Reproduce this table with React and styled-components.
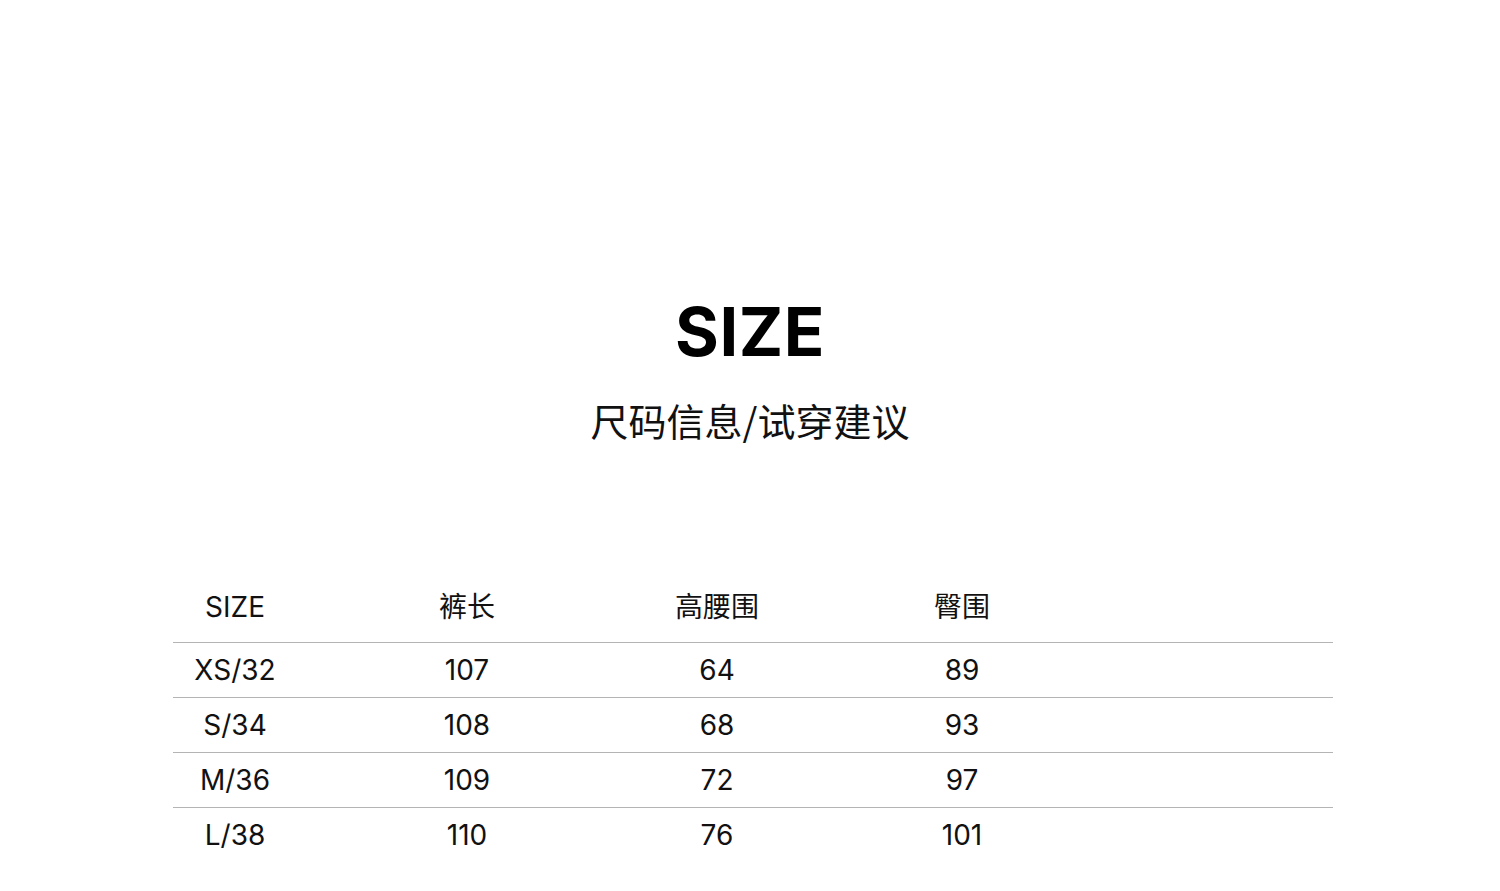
import React from 'react';
import styled, { createGlobalStyle } from 'styled-components';

const GlobalStyle = createGlobalStyle`
  body {
    margin: 0;
    background: #ffffff;
    font-family: Inter, "Noto Sans CJK SC", sans-serif;
    color: #111111;
  }
`;

const Page = styled.div`
  width: 1500px;
  height: 891px;
  overflow: hidden;
  display: flex;
  flex-direction: column;
  align-items: center;
`;

const Title = styled.h1`
  margin: 292px 0 0;
  font-family: Inter, "Noto Sans CJK SC", sans-serif;
  font-size: 67px;
  line-height: 80px;
  font-weight: 700;
  letter-spacing: 0.5px;
  color: #000000;
`;

const Subtitle = styled.h2`
  margin: 23px 0 0;
  font-family: "Noto Sans CJK SC", sans-serif;
  font-size: 38px;
  line-height: 50px;
  font-weight: 400;
  color: #111111;
`;

const Table = styled.div`
  align-self: flex-start;
  margin: 136px 0 0 173px;
  width: 1160px;
`;

const Row = styled.div`
  display: grid;
  grid-template-columns: 124px 340px 160px 330px 1fr;
  height: ${(p) => (p.head ? '61px' : '54px')};
  align-items: ${(p) => (p.head ? 'start' : 'center')};
  border-top: ${(p) => (p.head ? 'none' : '1px solid #b4b4b4')};
`;

const Cell = styled.div`
  text-align: center;
  font-family: Inter, "Noto Sans CJK SC", sans-serif;
  font-size: 28px;
  line-height: 52px;
  color: #111111;
  white-space: nowrap;
`;

const headers = ['SIZE', '裤长', '高腰围', '臀围'];
const rows = [
  ['XS/32', '107', '64', '89'],
  ['S/34', '108', '68', '93'],
  ['M/36', '109', '72', '97'],
  ['L/38', '110', '76', '101'],
];

const App = () => (
  <>
    <GlobalStyle />
    <Page>
      <Title>SIZE</Title>
      <Subtitle>尺码信息/试穿建议</Subtitle>
      <Table>
        <Row head>
          {headers.map((h) => (
            <Cell key={h}>{h}</Cell>
          ))}
          <div />
        </Row>
        {rows.map((r) => (
          <Row key={r[0]}>
            {r.map((v, i) => (
              <Cell key={i}>{v}</Cell>
            ))}
            <div />
          </Row>
        ))}
      </Table>
    </Page>
  </>
);

export default App;
